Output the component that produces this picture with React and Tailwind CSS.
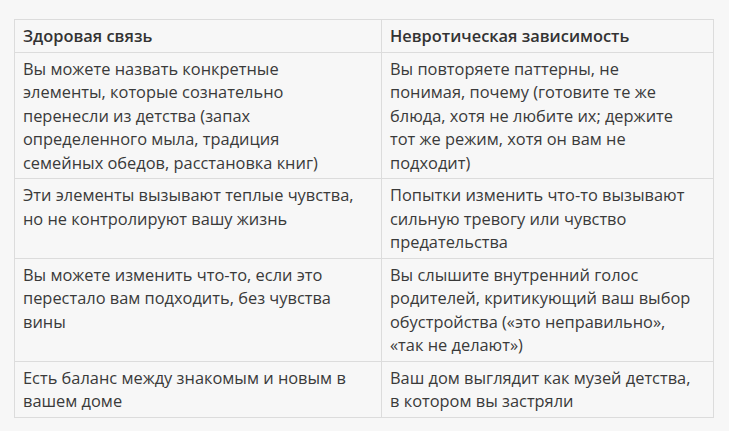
const rows = [
  [
    ['Вы можете назвать конкретные', 'элементы, которые сознательно', 'перенесли из детства (запах', 'определенного мыла, традиция', 'семейных обедов, расстановка книг)'],
    ['Вы повторяете паттерны, не', 'понимая, почему (готовите те же', 'блюда, хотя не любите их; держите', 'тот же режим, хотя он вам не', 'подходит)'],
  ],
  [
    ['Эти элементы вызывают теплые чувства,', 'но не контролируют вашу жизнь'],
    ['Попытки изменить что-то вызывают', 'сильную тревогу или чувство', 'предательства'],
  ],
  [
    ['Вы можете изменить что-то, если это', 'перестало вам подходить, без чувства', 'вины'],
    ['Вы слышите внутренний голос', 'родителей, критикующий ваш выбор', 'обустройства («это неправильно»,', '«так не делают»)'],
  ],
  [
    ['Есть баланс между знакомым и новым в', 'вашем доме'],
    ['Ваш дом выглядит как музей детства,', 'в котором вы застряли'],
  ],
]

function Lines({ lines }) {
  return lines.map((l, i) => (
    <span key={i} className="block whitespace-nowrap">{l}</span>
  ))
}

export default function App() {
  return (
    <div className="min-h-[431px] bg-[#f7f7f7] pt-[19px] pl-[14px] font-['Open_Sans',sans-serif] text-[16.4px] leading-[23.5px] text-[#3a3a3a]">
      <table className="w-[700px] table-fixed border-collapse border border-[#dcdcdc]">
        <colgroup>
          <col className="w-[367px]" />
          <col />
        </colgroup>
        <thead>
          <tr>
            <th className="border border-[#dcdcdc] px-2 py-1 text-left font-semibold text-[#333]">Здоровая связь</th>
            <th className="border border-[#dcdcdc] px-2 py-1 text-left font-semibold text-[#333]">Невротическая зависимость</th>
          </tr>
        </thead>
        <tbody>
          {rows.map((r, i) => (
            <tr key={i}>
              <td className="border border-[#dcdcdc] px-2 py-1 align-top"><Lines lines={r[0]} /></td>
              <td className="border border-[#dcdcdc] px-2 py-1 align-top"><Lines lines={r[1]} /></td>
            </tr>
          ))}
        </tbody>
      </table>
    </div>
  )
}
